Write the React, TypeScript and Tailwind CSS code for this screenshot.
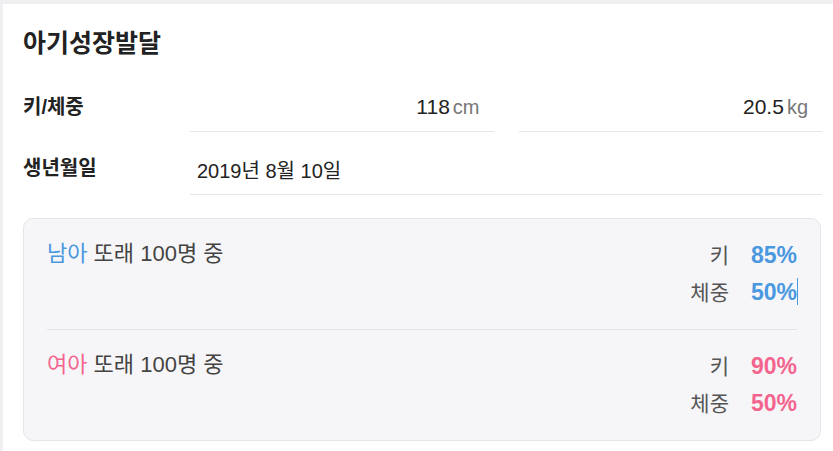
import React from 'react';

const FONT = { fontFamily: '"Liberation Sans", "Noto Sans CJK KR", sans-serif' };

interface StatRow {
  label: string;
  value: string;
  caret?: boolean;
}

interface PeerSectionProps {
  who: string;
  tone: 'boy' | 'girl';
  rows: StatRow[];
  divided?: boolean;
}

const PeerSection: React.FC<PeerSectionProps> = ({ who, tone, rows, divided }) => {
  const color = tone === 'boy' ? 'text-[#4a98e0]' : 'text-[#f3658f]';
  return (
    <div className={`flex justify-between items-start py-[18px] ${divided ? 'border-t border-[#e4e4e8]' : ''}`}>
      <div className="text-[22px] leading-[34px] text-[#444]">
        <span className={color}>{who}</span> 또래 100명 중
      </div>
      <div className="flex flex-col">
        {rows.map((r) => (
          <div key={r.label} className="flex justify-end items-center gap-[22px] h-[37px]">
            <span className="text-[21px] text-[#555]">{r.label}</span>
            <span className={`relative text-[23px] font-bold ${color}`}>
              {r.value}
              {r.caret && (
                <span className="absolute right-[-1px] top-[3px] w-px h-[27px] bg-[#4a98e0]" />
              )}
            </span>
          </div>
        ))}
      </div>
    </div>
  );
};

export default function App() {
  return (
    <div className="h-screen overflow-hidden bg-[#efeff1] pt-[4px] pl-[3px]" style={FONT}>
      <div className="bg-white h-full pl-5 pr-[11px] pt-[24px]">
        <h1 className="text-[25px] leading-[31px] font-bold text-[#222]">아기성장발달</h1>

        <div className="mt-[24px] flex items-center">
          <div className="w-[167px] text-[20px] font-bold text-[#222] -mt-[2px]">키/체중</div>
          <div className="flex-1 flex gap-[25px]">
            <div className="flex-1 h-[49px] flex items-center justify-end pr-[14px] border-b border-[#e6e6e6]">
              <span className="text-[21px] text-[#222]">118</span>
              <span className="ml-[3px] text-[20px] text-[#777]">cm</span>
            </div>
            <div className="flex-1 h-[49px] flex items-center justify-end pr-[14px] border-b border-[#e6e6e6]">
              <span className="text-[21px] text-[#222]">20.5</span>
              <span className="ml-[3px] text-[20px] text-[#777]">kg</span>
            </div>
          </div>
        </div>

        <div className="mt-[15px] flex items-center">
          <div className="w-[167px] text-[20px] font-bold text-[#222] -mt-[6px]">생년월일</div>
          <div className="flex-1 h-[48px] flex items-center pl-[7px] border-b border-[#e6e6e6]">
            <span className="text-[20px] text-[#222]">2019년 8월 10일</span>
          </div>
        </div>

        <div className="mt-[23px] mr-[1px] rounded-[10px] border border-[#e6e6ea] bg-[#f6f6f8] pl-[23px] pr-[23px]">
          <PeerSection
            who="남아"
            tone="boy"
            rows={[
              { label: '키', value: '85%' },
              { label: '체중', value: '50%', caret: true },
            ]}
          />
          <PeerSection
            who="여아"
            tone="girl"
            divided
            rows={[
              { label: '키', value: '90%' },
              { label: '체중', value: '50%' },
            ]}
          />
        </div>
      </div>
    </div>
  );
}
